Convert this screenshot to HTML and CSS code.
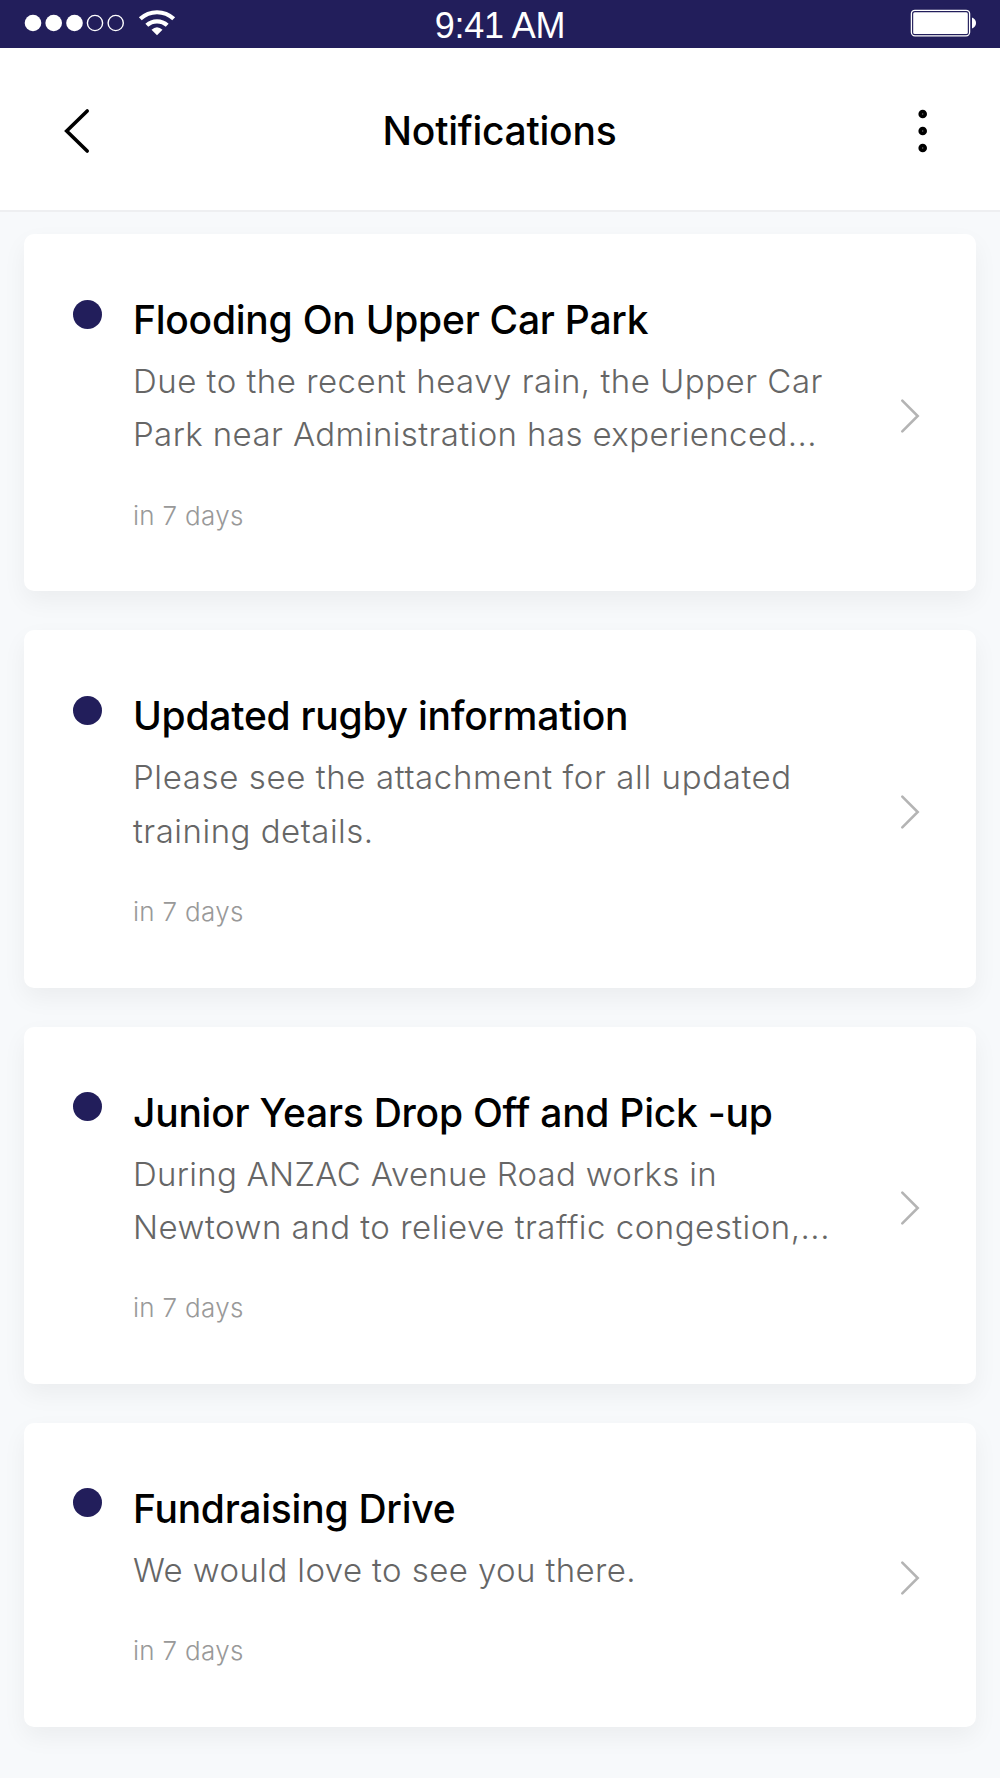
FILE: index.html
```html
<!DOCTYPE html>
<html lang="en">
<head>
<meta charset="utf-8">
<title>Notifications</title>
<link rel="stylesheet" href="styles.css">
</head>
<body>
<div class="status">
  <svg class="signal" width="160" height="48" viewBox="0 0 160 48" fill="#fff">
    <circle cx="9" cy="23" r="8.300"/><circle cx="29.700" cy="23" r="8.300"/><circle cx="50.500" cy="23" r="8.300"/>
    <g fill="none" stroke="#fff" stroke-width="1.400"><circle cx="71" cy="23" r="7.600"/><circle cx="91.700" cy="23" r="7.600"/></g>
    <path d="M133 35.300l-5.500-5.500q5.500-5 11 0z"/>
    <g fill="none" stroke="#fff" stroke-width="4.200"><path d="M122.800 25.300a15 15 0 0 1 20.400 0M116.300 18.800a24.500 24.500 0 0 1 33.400 0"/></g>
  </svg>
  <div class="time">9:41 AM</div>
  <svg class="battery" width="66" height="48" viewBox="0 0 66 48"><rect x="1.400" y="10.300" width="58.200" height="25.500" rx="3.500" fill="none" stroke="#fff" stroke-width="1.300"/><rect x="3.200" y="12.200" width="54.600" height="21.700" rx="1.500" fill="#fff"/><path d="M62 17.500q4 1.700 4 5.500t-4 5.500z" fill="#fff"/></svg>
</div>
<header class="header">
  <svg class="back" width="28" height="46" viewBox="0 0 28 46"><path d="M25.200 3L4.700 23L25.200 43" fill="none" stroke="#000" stroke-width="3.600" stroke-linecap="round"/></svg>
  <h1 class="heading">Notifications</h1>
  <svg class="more" width="12" height="46" viewBox="0 0 12 46" fill="#777" stroke="#000" stroke-width="3.600"><circle cx="5.700" cy="6" r="2.500"/><circle cx="5.700" cy="23" r="2.500"/><circle cx="5.700" cy="40" r="2.500"/></svg>
</header>
<main class="list">
  <article class="card">
    <span class="dot"></span>
    <div class="content"><h2 class="title">Flooding On Upper Car Park</h2><p class="text"><span class="line">Due to the recent heavy rain, the Upper Car</span><span class="line snug">Park near Administration has experienced...</span></p><p class="date">in 7 days</p></div>
    <svg class="chevron" width="22" height="36" viewBox="0 0 22 36"><path d="M2.300 2.600L17.700 18L2.300 33.400"/></svg>
  </article>
  <article class="card">
    <span class="dot"></span>
    <div class="content"><h2 class="title">Updated rugby information</h2><p class="text"><span class="line loose">Please see the attachment for all updated</span><span class="line">training details.</span></p><p class="date">in 7 days</p></div>
    <svg class="chevron" width="22" height="36" viewBox="0 0 22 36"><path d="M2.300 2.600L17.700 18L2.300 33.400"/></svg>
  </article>
  <article class="card">
    <span class="dot"></span>
    <div class="content"><h2 class="title">Junior Years Drop Off and Pick -up</h2><p class="text"><span class="line tight">During ANZAC Avenue Road works in</span><span class="line">Newtown and to relieve traffic congestion,...</span></p><p class="date">in 7 days</p></div>
    <svg class="chevron" width="22" height="36" viewBox="0 0 22 36"><path d="M2.300 2.600L17.700 18L2.300 33.400"/></svg>
  </article>
  <article class="card">
    <span class="dot"></span>
    <div class="content"><h2 class="title">Fundraising Drive</h2><p class="text"><span class="line snug">We would love to see you there.</span></p><p class="date">in 7 days</p></div>
    <svg class="chevron" width="22" height="36" viewBox="0 0 22 36"><path d="M2.300 2.600L17.700 18L2.300 33.400"/></svg>
  </article>
</main>
</body>
</html>
```
FILE: styles.css
```css
* { box-sizing: border-box; }
body { margin: 0; width: 1000px; height: 1778px; overflow: hidden; background: #f7f9fb; font-family: Inter, sans-serif; color: #000; }
h1, h2, p { margin: 0; }
svg { display: block; }
.status { height: 48px; background: #221e5b; color: #fff; display: grid; grid-template-columns: 1fr auto 1fr; padding: 0 24px; }
.time { font: 36px/51px "Liberation Sans", sans-serif; letter-spacing: -.2px; }
.battery { justify-self: end; }
.header { height: 164px; background: #fff; border-bottom: 2px solid #eeeff1; display: grid; grid-template-columns: 1fr auto 1fr; align-items: center; padding: 3px 71px 0 62px; }
.heading { font-size: 39px; font-weight: 500; line-height: 48px; letter-spacing: -.25px; padding: 1px 0 0 8px; }
.more { justify-self: end; }
.list { padding: 22px 24px; display: flex; flex-direction: column; gap: 39px; }
.card { background: #fff; border-radius: 10px; display: flex; padding: 59px 54px 57.700px 48.500px; box-shadow: 0 10px 24px rgba(0, 0, 0, .05); }
.dot { width: 29px; height: 29px; margin: 6.500px 31.500px 0 0; border-radius: 50%; background: #221e5b; flex: none; }
.content { flex: 1; white-space: nowrap; }
.title { font-size: 39px; font-weight: 500; line-height: 54px; letter-spacing: -.25px; }
.text { font-size: 33px; font-weight: 300; line-height: 53.300px; margin-top: 8px; color: #666; }
.line { display: block; letter-spacing: .5px; }
.snug { letter-spacing: .4px; }
.tight { letter-spacing: .28px; }
.loose { letter-spacing: .62px; }
.date { font-size: 26px; font-weight: 300; line-height: 36px; letter-spacing: .3px; margin-top: 36px; color: #999; }
.chevron { align-self: center; margin-top: 5px; fill: none; stroke: #b4b4b4; stroke-width: 2.600; stroke-linecap: round; }
```
